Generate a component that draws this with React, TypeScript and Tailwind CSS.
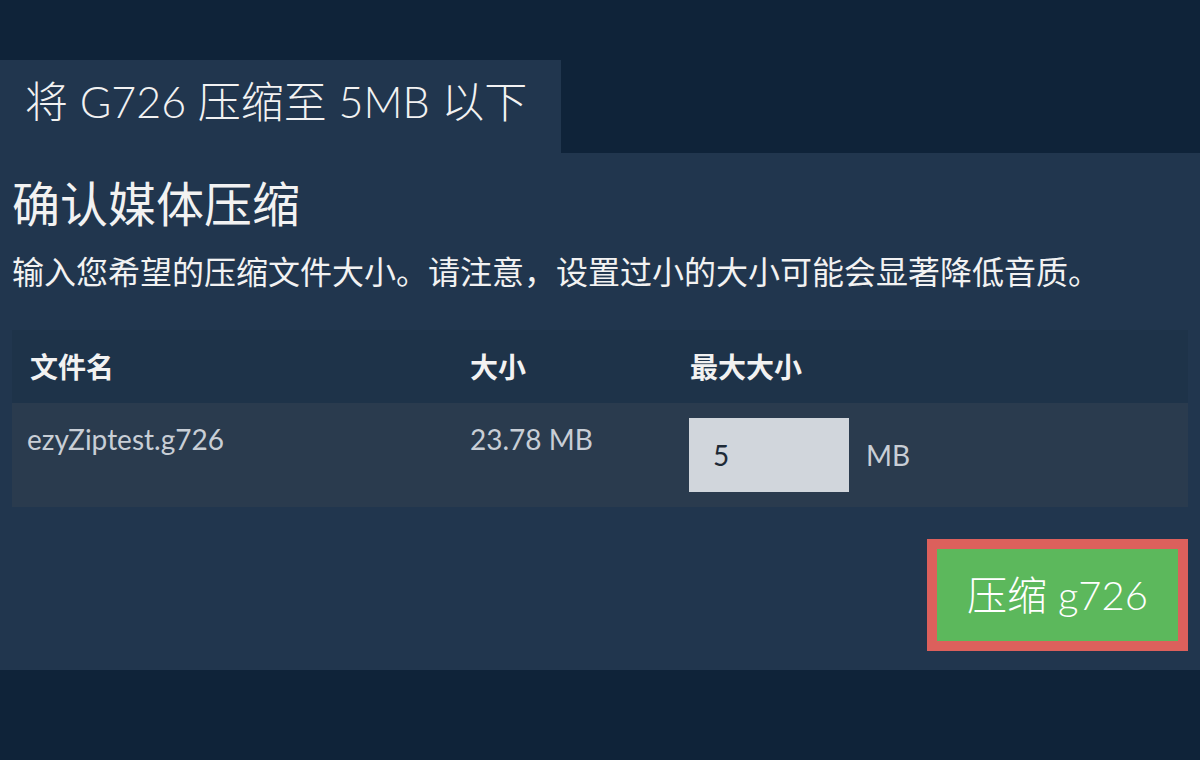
import React from "react";

const FONT = 'Lato, "Noto Sans CJK SC", sans-serif';

export default function App() {
  return (
    <div
      className="w-[1200px] h-[760px] bg-[#0f2339] pt-[60px] text-[#f2f2f2]"
      style={{ fontFamily: FONT }}
    >
      <div className="w-[561px] h-[93px] bg-[#21364e] flex items-center pl-[25px] pb-[10px]">
        <span className="text-[43px] leading-none font-light">将 G726 压缩至 5MB 以下</span>
      </div>
      <div className="h-[517px] bg-[#21364e] px-[12px] pt-[23px]">
        <h1 className="text-[48px] leading-[56px] font-normal">确认媒体压缩</h1>
        <p className="mt-[20px] text-[32px] leading-[40px]">
          输入您希望的压缩文件大小。请注意，设置过小的大小可能会显著降低音质。
        </p>
        <div className="mt-[38px]">
          <div className="grid grid-cols-[440px_220px_1fr] h-[73px] bg-[#1e3349] items-center font-bold text-[28px]">
            <div className="pl-[18px]">文件名</div>
            <div className="pl-[18px]">大小</div>
            <div className="pl-[18px]">最大大小</div>
          </div>
          <div className="grid grid-cols-[440px_220px_1fr] h-[104px] bg-[#2a3b4e] text-[28px] text-[#c8ced6]">
            <div className="pl-[15px] pt-[15px]">ezyZiptest.g726</div>
            <div className="pl-[18px] pt-[15px]">23.78 MB</div>
            <div className="pl-[17px] flex items-center gap-[17px]">
              <div className="w-[160px] h-[74px] bg-[#d1d6dc] flex items-center pl-[24px] text-[#1e2a36]">5</div>
              <span>MB</span>
            </div>
          </div>
        </div>
        <div className="flex justify-end mt-[32px]">
          <button
            className="w-[261px] h-[112px] border-[10px] border-[#dc605c] bg-[#5cb85c] text-white text-[40px] font-light flex items-center justify-center"
            style={{ fontFamily: FONT }}
          >
            压缩 g726
          </button>
        </div>
      </div>
    </div>
  );
}
